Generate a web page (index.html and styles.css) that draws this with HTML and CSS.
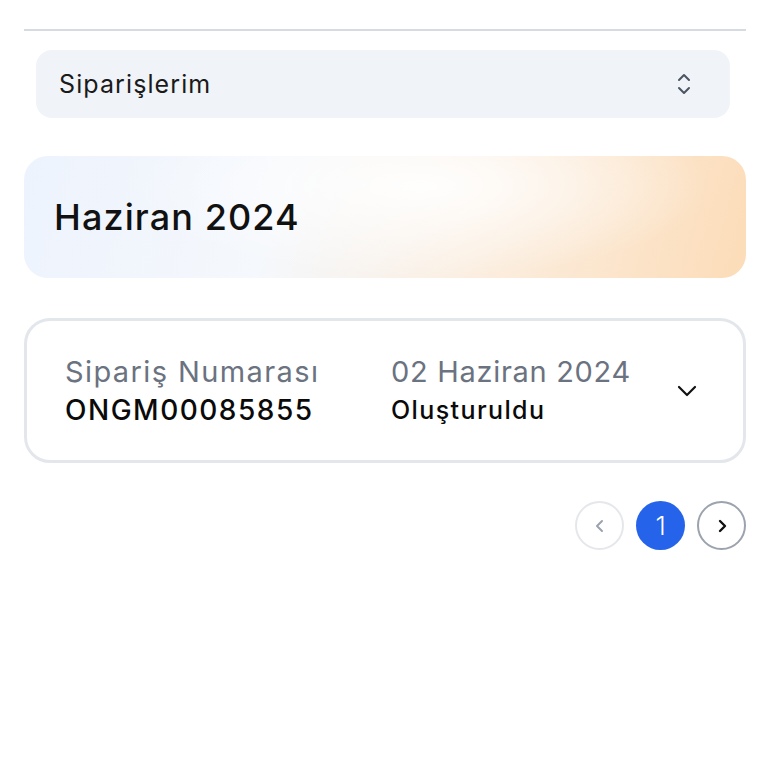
FILE: index.html
```
<!DOCTYPE html>
<html lang="tr">
<head>
  <meta charset="UTF-8">
  <meta name="viewport" content="width=device-width, initial-scale=1.0">
  <title>Siparişlerim</title>
  <link rel="stylesheet" href="styles.css">
</head>
<body>
  <div class="page">
    <hr class="divider">

    <div class="select-box">
      <span>Siparişlerim</span>
      <svg class="select-icon" width="16" height="24" viewBox="0 0 16 24" fill="none" stroke="#4b5563" stroke-width="2" stroke-linecap="round" stroke-linejoin="round">
        <path d="M3 8l5-5 5 5"/>
        <path d="M3 16l5 5 5-5"/>
      </svg>
    </div>

    <div class="month-card">
      <h2>Haziran 2024</h2>
    </div>

    <div class="order-card">
      <div class="order-col number-col">
        <p class="label">Sipariş Numarası</p>
        <p class="value">ONGM00085855</p>
      </div>
      <div class="order-col date-col">
        <p class="label">02 Haziran 2024</p>
        <p class="value status">Oluşturuldu</p>
      </div>
      <svg class="order-toggle" width="20" height="12" viewBox="0 0 20 12" fill="none" stroke="#111" stroke-width="2.2" stroke-linecap="round" stroke-linejoin="round">
        <path d="M2 2l8 8 8-8"/>
      </svg>
    </div>

    <div class="pager">
      <button class="page-btn prev">
        <svg width="12" height="14" viewBox="0 0 12 14" fill="none" stroke="#9ca3af" stroke-width="2" stroke-linecap="round" stroke-linejoin="round"><path d="M8 2L3 7l5 5"/></svg>
      </button>
      <button class="page-btn active">1</button>
      <button class="page-btn next">
        <svg width="12" height="14" viewBox="0 0 12 14" fill="none" stroke="#111" stroke-width="2.4" stroke-linecap="round" stroke-linejoin="round"><path d="M4 2l5 5-5 5"/></svg>
      </button>
    </div>
  </div>
</body>
</html>
```

FILE: styles.css
```
* {
  margin: 0;
  padding: 0;
  box-sizing: border-box;
}

body {
  background-color: #fff;
  color: #111;
  font-family: 'Inter', 'Noto Sans', sans-serif;
}

.page {
  padding: 29px 22px 0 24px;
}

.divider {
  border: none;
  border-top: 2px solid #d6dbe1;
}

.select-box {
  display: flex;
  align-items: center;
  justify-content: space-between;
  margin: 19px 16px 0 12px;
  height: 68px;
  padding: 0 38px 0 23px;
  background-color: #f0f3f7;
  border-radius: 16px;
  font-size: 25px;
  letter-spacing: 1.1px;
  color: #1a1a1a;
}

.month-card {
  margin-top: 38px;
  height: 122px;
  display: flex;
  align-items: center;
  padding: 0 30px;
  border-radius: 24px;
  background:
    radial-gradient(ellipse 40% 75% at 55% 25%, rgba(255,255,255,0.95), rgba(255,255,255,0) 100%),
    linear-gradient(105deg, #edf3fd 0%, #f5f8fc 35%, #fbefe2 62%, #fcdcb8 100%);
}

.month-card h2 {
  font-size: 36px;
  font-weight: 500;
  letter-spacing: 1.1px;
  color: #111;
}

.order-card {
  margin-top: 40px;
  height: 145px;
  display: flex;
  align-items: center;
  padding: 0 46px 0 38px;
  border: 3px solid #e3e7ec;
  border-radius: 26px;
}

.order-col p {
  line-height: 38px;
}

.number-col {
  width: 326px;
}

.date-col {
  flex: 1;
}

.label {
  font-size: 29px;
  letter-spacing: 0.7px;
  color: #6b7280;
}

.number-col .label {
  letter-spacing: 1.4px;
}

.value {
  font-size: 28px;
  font-weight: 500;
  letter-spacing: 1.5px;
  color: #0a0a0a;
}

.value.status {
  font-size: 25px;
  letter-spacing: 1.4px;
}

.pager {
  display: flex;
  justify-content: flex-end;
  gap: 12px;
  margin-top: 38px;
}

.page-btn {
  width: 49px;
  height: 49px;
  border-radius: 50%;
  background: #fff;
  display: flex;
  align-items: center;
  justify-content: center;
  font-family: inherit;
  font-size: 26px;
  cursor: pointer;
}

.page-btn.prev {
  border: 2px solid #e5e7eb;
}

.page-btn.active {
  border: none;
  background-color: #2563eb;
  color: #fff;
  font-weight: 300;
}

.page-btn.next {
  border: 2px solid #9ca3af;
}
```
